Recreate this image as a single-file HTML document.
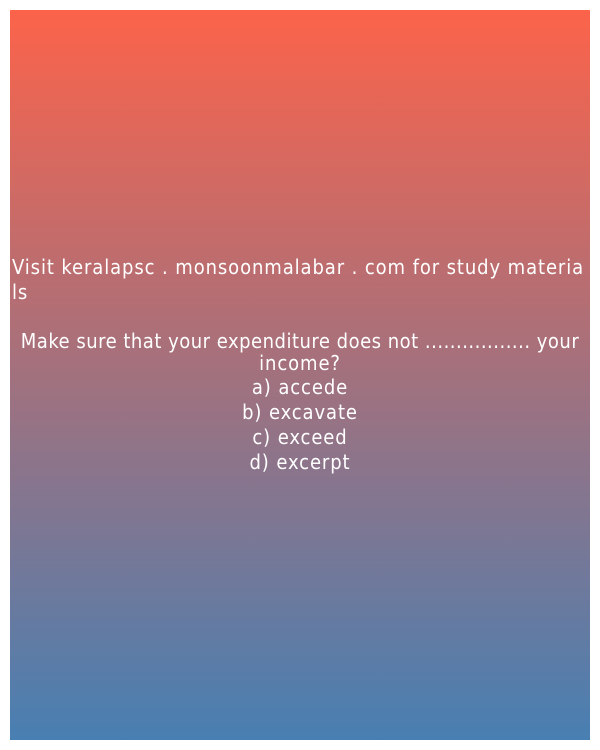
<!DOCTYPE html>
<html><head><meta charset="utf-8"><style>
html,body{margin:0;padding:0;background:#fff;width:600px;height:750px;overflow:hidden}
.box{position:absolute;left:10px;top:10px;width:580px;height:730px;background:linear-gradient(to bottom,#fc634a,#487fb2)}
.t{font-family:"DejaVu Sans Condensed","DejaVu Sans","Liberation Sans",sans-serif;font-stretch:condensed;color:#fff;font-size:20px}
.v{position:absolute;left:2px;top:245px;width:590px;line-height:25px;letter-spacing:0.9px}
.q{position:absolute;left:0;top:319px;width:580px;text-align:center;line-height:25px;letter-spacing:0.9px}
.q .l1{white-space:nowrap;margin-left:-40px;margin-right:-40px;letter-spacing:0.5px}
.q .l2{line-height:24px;margin-top:-3px}
</style></head><body>
<div class="box">
<div class="t v">Visit keralapsc . monsoonmalabar . com for study materia<br>ls</div>
<div class="t q"><div class="l1">Make sure that your expenditure does not ................. your</div><div class="l2">income?</div>a) accede<br>b) excavate<br>c) exceed<br>d) excerpt</div>
</div>
</body></html>
